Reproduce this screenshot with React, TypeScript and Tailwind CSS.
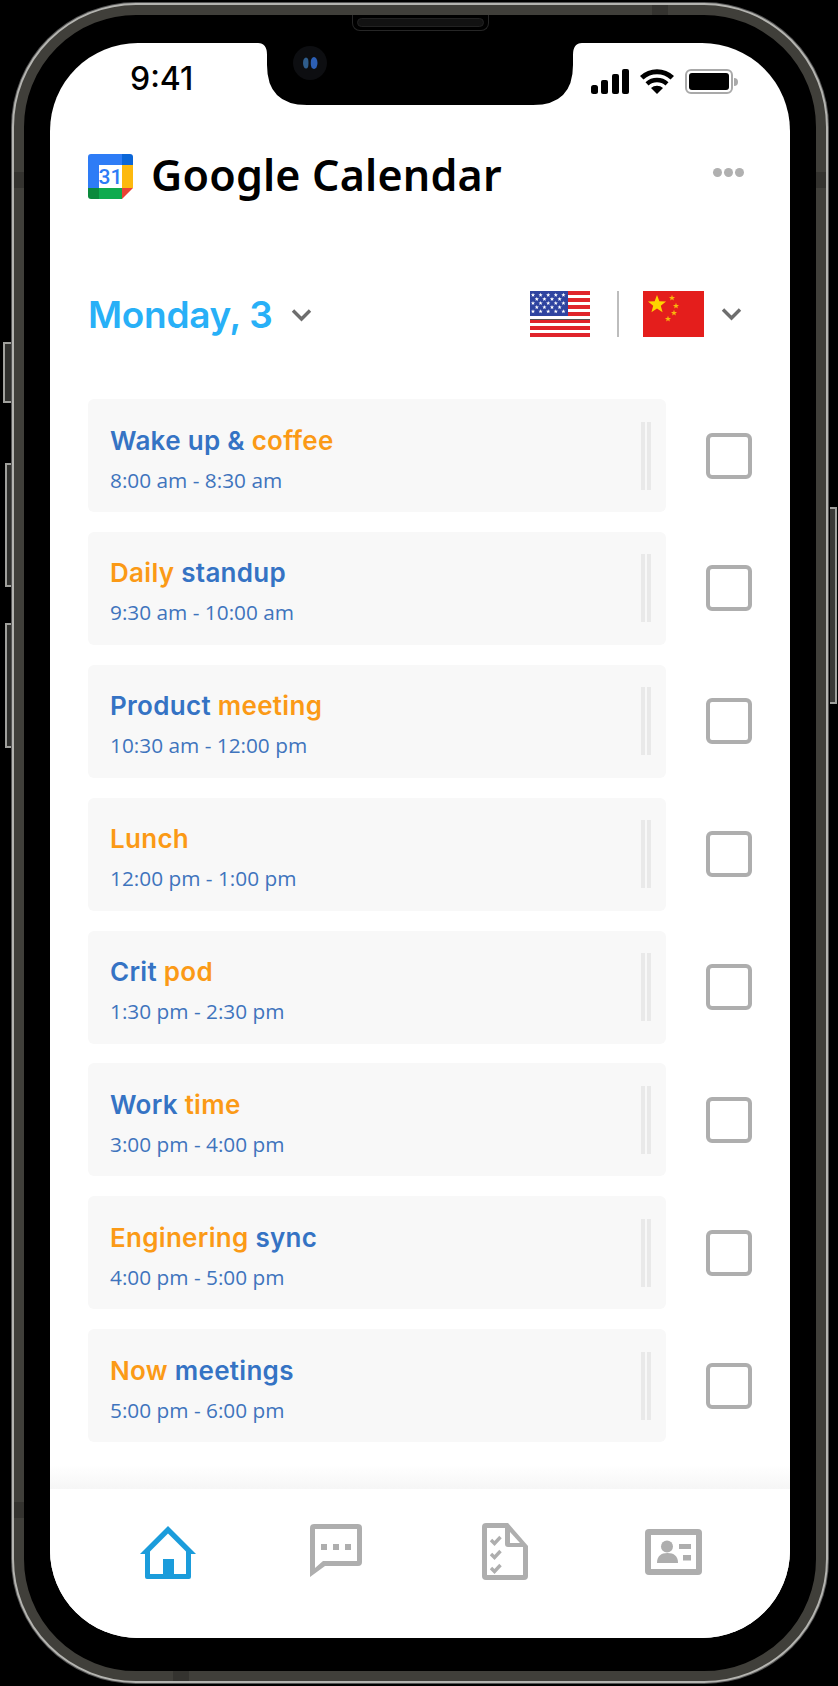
const events = [
  { first: "Wake up & ", second: "coffee", startsOrange: false, time: "8:00 am - 8:30 am" },
  { first: "Daily ", second: "standup", startsOrange: true, time: "9:30 am - 10:00 am" },
  { first: "Product ", second: "meeting", startsOrange: false, time: "10:30 am - 12:00 pm" },
  { first: "Lunch", second: "", startsOrange: true, time: "12:00 pm - 1:00 pm" },
  { first: "Crit ", second: "pod", startsOrange: false, time: "1:30 pm - 2:30 pm" },
  { first: "Work ", second: "time", startsOrange: false, time: "3:00 pm - 4:00 pm" },
  { first: "Enginering ", second: "sync", startsOrange: true, time: "4:00 pm - 5:00 pm" },
  { first: "Now ", second: "meetings", startsOrange: true, time: "5:00 pm - 6:00 pm" },
];

function Chevron() {
  return (
    <svg width="21" height="14" viewBox="0 0 21 14" fill="none">
      <path d="M2 2.5l8.5 8.5L19 2.5" stroke="#6e6e6e" strokeWidth="3.4" />
    </svg>
  );
}

function CalendarLogo() {
  return (
    <svg width="45" height="45" viewBox="0 0 45 45" className="mt-[2px] shrink-0">
      <path d="M3 0h31v11H11v23H0V3a3 3 0 0 1 3-3z" fill="#2e7cf6" />
      <path d="M34 0h8a3 3 0 0 1 3 3v8H34z" fill="#0b66d8" />
      <rect x="34" y="11" width="11" height="23" fill="#fdb90f" />
      <path d="M11 34h23v11H11z" fill="#0fab4e" />
      <path d="M0 34h11v11H3a3 3 0 0 1-3-3z" fill="#0b8a3c" />
      <path d="M34 34h11L34 45z" fill="#ea4335" />
      <rect x="11" y="11" width="23" height="23" fill="#fff" />
      <text x="22.5" y="30" textAnchor="middle" fontSize="21" fontWeight="500" fontFamily="Roboto, sans-serif" fill="#2e7cf6">
        31
      </text>
    </svg>
  );
}

function Star({ x, y, r, fill = "#fdd400" }: { x: number; y: number; r: number; fill?: string }) {
  const pts = Array.from({ length: 10 }, (_, i) => {
    const a = -Math.PI / 2 + (i * Math.PI) / 5;
    const d = i % 2 === 0 ? r : r * 0.42;
    return `${x + d * Math.cos(a)},${y + d * Math.sin(a)}`;
  }).join(" ");
  return <polygon points={pts} fill={fill} />;
}

function UsFlag() {
  const stars: [number, number][] = [];
  for (let row = 0; row < 5; row++) {
    const odd = row % 2 === 1;
    for (let col = 0; col < (odd ? 4 : 5); col++) {
      stars.push([3 + (odd ? 3.8 : 0) + col * 7.6, 4 + row * 4.1]);
    }
  }
  return (
    <svg width="60" height="46" viewBox="0 0 60 46" className="shrink-0">
      <rect width="60" height="46" fill="#fff" />
      {[0, 7, 14, 21, 28, 35, 42].map((y) => (
        <rect key={y} y={y} width="60" height="4" fill="#e0242b" />
      ))}
      <rect y="28" width="60" height="1" fill="#555" />
      <rect width="38" height="25" fill="#2f44a0" />
      {stars.map(([x, y]) => (
        <Star key={`${x}-${y}`} x={x} y={y} r={2.2} fill="#fff" />
      ))}
    </svg>
  );
}

function CnFlag() {
  return (
    <svg width="61" height="46" viewBox="0 0 61 46" className="shrink-0">
      <rect width="61" height="46" fill="#e41e1c" />
      <Star x={14} y={13.5} r={9.5} />
      <Star x={29} y={7} r={3.2} fill="#f9b60c" />
      <Star x={33} y={15} r={3.2} fill="#f9b60c" />
      <Star x={31} y={22} r={3.2} fill="#f9b60c" />
      <Star x={25} y={28} r={3.2} fill="#f9b60c" />
    </svg>
  );
}

function EventRow({ first, second, startsOrange, time }: (typeof events)[number]) {
  return (
    <div className="flex items-center gap-10">
      <div className="flex h-[113px] w-[578px] items-center justify-between rounded-md bg-[#f8f8f8] pl-[22px] pr-[15px]">
        <div className="pt-2">
          <div className="text-[26px] leading-[32px] font-semibold font-['Inter',sans-serif] tracking-[0.3px]">
            <span className={startsOrange ? "text-[#fb9a16]" : "text-[#3573c4]"}>{first}</span>
            <span className={startsOrange ? "text-[#3573c4]" : "text-[#fb9a16]"}>{second}</span>
          </div>
          <div className="mt-2 text-[20.8px] leading-[30px] text-[#3f74bd] font-['Open_Sans',sans-serif]">{time}</div>
        </div>
        <div className="flex gap-0.5">
          <div className="h-[68px] w-1 bg-[#e9e9e9]" />
          <div className="h-[68px] w-1 bg-[#e9e9e9]" />
        </div>
      </div>
      <div className="h-[46px] w-[46px] rounded-md border-4 border-[#aeaeae] bg-white" />
    </div>
  );
}

function BottomNav() {
  return (
    <div className="flex h-[149px] items-start bg-white">
      <svg width="56" height="54" viewBox="0 0 56 54" className="ml-[90px] mt-[37px] shrink-0">
        <path d="M0 28L28 0l28 28h-5v23a2 2 0 0 1-2 2H7a2 2 0 0 1-2-2V28z" fill="#1b9cdb" />
        <path d="M28 7.500L10 25.500V48h13V33h11v15h12V25.500z" fill="#fff" />
      </svg>
      <svg width="52" height="53" viewBox="0 0 52 53" className="ml-[114px] mt-[35px] shrink-0">
        <path d="M4 0h44a4 4 0 0 1 4 4v34a4 4 0 0 1-4 4H15L0 53V4a4 4 0 0 1 4-4z" fill="#aeaeae" />
        <path d="M5 5h42v32H13L5 44z" fill="#fff" />
        <path d="M11 20h6v6h-6zM23 20h6v6h-6zM35 20h6v6h-6z" fill="#aeaeae" />
      </svg>
      <svg width="46" height="57" viewBox="0 0 46 57" className="ml-[120px] mt-[34px] shrink-0">
        <path d="M4 0h22l20 23v30a4 4 0 0 1-4 4H4a4 4 0 0 1-4-4V4a4 4 0 0 1 4-4z" fill="#aeaeae" />
        <path d="M5 5h18v16a3 3 0 0 0 3 3h15v28H5z" fill="#fff" />
        <path d="M28 9l10 11H28z" fill="#fff" />
        <path d="M9 17l3.500 3.500 6-6.500M9 31l3.500 3.500 6-6.500M9 45l3.500 3.500 6-6.500" fill="none" stroke="#aeaeae" strokeWidth="3.400" />
      </svg>
      <svg width="57" height="46" viewBox="0 0 57 46" className="ml-[117px] mt-[40px] shrink-0">
        <rect width="57" height="46" rx="4" fill="#aeaeae" />
        <rect x="6" y="6" width="45" height="34" fill="#fff" />
        <circle cx="22" cy="17.500" r="6" fill="#aeaeae" />
        <path d="M12 34c0-7 4-10 10.500-10S33 27 33 34z" fill="#aeaeae" />
        <path d="M34 15h12v5H34zM38 26h8v5.500h-8z" fill="#aeaeae" />
      </svg>
    </div>
  );
}

export default function App() {
  return (
    <div className="relative h-[1686px] w-[838px] overflow-hidden bg-black pl-[14px] pr-[12px] pt-[5px]">
      {/* side buttons */}
      <div className="absolute left-[3px] top-[342px] h-[61px] w-2 border-y-2 border-l-2 border-[#a0a09c] bg-[#30302d]" />
      <div className="absolute left-[5px] top-[463px] h-[124px] w-1.5 border-y-2 border-l-2 border-[#a0a09c] bg-[#30302d]" />
      <div className="absolute left-[5px] top-[623px] h-[125px] w-1.5 border-y-2 border-l-2 border-[#a0a09c] bg-[#30302d]" />
      <div className="absolute left-[830px] top-[507px] h-[197px] w-[7px] border-y-2 border-r-2 border-[#a0a09c] bg-[#3a3936]" />

      {/* phone body */}
      <div className="relative h-[1676px] w-[812px] rounded-[122px] border-[10px] border-[#403f3a] bg-black px-[26px] pt-[28px] shadow-[0_0_0_2px_#b4b4b0,0_0_0_3px_#555]">
        <div className="absolute left-[-10px] top-[157px] h-4 w-2.5 bg-[#34332f]" />
        <div className="absolute right-[-10px] top-[157px] h-4 w-2.5 bg-[#34332f]" />
        <div className="absolute left-[-10px] top-[1487px] h-4 w-2.5 bg-[#34332f]" />
        <div className="absolute left-[628px] top-[-10px] h-2.5 w-4 bg-[#34332f]" />
        <div className="absolute left-[149px] bottom-[-10px] h-2.5 w-4 bg-[#34332f]" />

        {/* speaker */}
        <div className="absolute left-[328px] top-0 h-4 w-[137px] rounded-b-lg border border-t-0 border-[#262626] px-1 pt-[3px] pb-[3px]">
          <div className="h-full rounded-full border border-[#222] bg-[#121212]" />
        </div>

        {/* screen */}
        <div className="relative flex h-[1595px] w-[740px] flex-col overflow-hidden rounded-[88px] bg-white">
          {/* notch */}
          <svg width="324" height="62" viewBox="0 0 324 62" className="absolute left-[208px] top-0">
            <path d="M0 0Q9 0 9 12V22Q9 62 49 62H275Q315 62 315 22V12Q315 0 324 0Z" fill="#000" />
          </svg>
          <svg width="34" height="34" viewBox="0 0 34 34" className="absolute left-[243px] top-[3px]">
            <circle cx="17" cy="17" r="17" fill="#0d0e11" />
            <ellipse cx="13" cy="17" rx="3" ry="5.500" fill="#2f5d8c" />
            <ellipse cx="21" cy="17" rx="3.500" ry="6" fill="#2c5fb5" />
            <rect x="15.500" y="11" width="2" height="12" fill="#0d0e11" />
          </svg>

          {/* status bar */}
          <div className="flex h-[51px] items-end justify-between pl-[80px] pr-[52px]">
            <div className="text-[32px] leading-[30px] font-medium font-['Inter',sans-serif] text-black">9:41</div>
            <div className="flex items-center gap-[11px]">
              <svg width="38" height="25" viewBox="0 0 38 25">
                <rect x="0" y="16" width="7" height="9" rx="2.500" />
                <rect x="10" y="11" width="7" height="14" rx="2" />
                <rect x="21" y="5" width="7" height="20" rx="2" />
                <rect x="31" y="0" width="7" height="25" rx="2" />
              </svg>
              <svg width="34" height="25" viewBox="0 0 34 25">
                <path d="M17 25l-6-6a9 9 0 0 1 12 0z" />
                <path d="M8.500 16.500l-3-3.200a17 17 0 0 1 23 0l-3 3.200a13 13 0 0 0-17 0z" />
                <path d="M3.500 10.500L0 7a25 25 0 0 1 34 0l-3.500 3.500a20 20 0 0 0-27 0z" />
              </svg>
              <div className="flex items-center gap-[1px]">
                <div className="h-[25px] w-[48px] rounded-md border-2 border-[#a9a9a9] p-0.5">
                  <div className="h-full rounded-[3px] bg-black" />
                </div>
                <div className="h-2 w-1 rounded-r-full bg-[#a9a9a9]" />
              </div>
            </div>
          </div>

          {/* title */}
          <div className="mt-[55px] flex items-center justify-between pl-[38px] pr-[46px]">
            <div className="flex items-center gap-[18px]">
              <CalendarLogo />
              <div className="text-[43px] leading-[52px] font-semibold font-['Noto_Sans',sans-serif] tracking-[0.2px] text-black">Google Calendar</div>
            </div>
            <div className="-mt-1.5 flex gap-[2px]">
              <div className="h-[9px] w-[9px] rounded-full bg-[#b0b0b0]" />
              <div className="h-[9px] w-[9px] rounded-full bg-[#b0b0b0]" />
              <div className="h-[9px] w-[9px] rounded-full bg-[#b0b0b0]" />
            </div>
          </div>

          {/* date and language */}
          <div className="mt-[91px] flex h-[46px] items-center justify-between pl-[38px] pr-[48px]">
            <div className="flex items-center gap-[18px]">
              <div className="text-[37px] leading-[46px] font-semibold font-['Inter',sans-serif] tracking-[-0.3px] text-[#28b0f7]">Monday, 3</div>
              <Chevron />
            </div>
            <div className="mb-[2px] flex items-center">
              <UsFlag />
              <div className="ml-[27px] mr-[24px] h-[46px] w-0.5 bg-[#bdbdbd]" />
              <CnFlag />
              <div className="ml-[17px]">
                <Chevron />
              </div>
            </div>
          </div>

          {/* schedule */}
          <div className="mt-[61px] flex flex-col gap-[19.9px] pl-[38px]">
            {events.map((ev) => (
              <EventRow key={ev.time} {...ev} />
            ))}
          </div>

          {/* fade over nav */}
          <div className="mt-auto h-6 bg-gradient-to-b from-white to-[#f6f6f6]" />
          <BottomNav />
        </div>
      </div>
    </div>
  );
}
